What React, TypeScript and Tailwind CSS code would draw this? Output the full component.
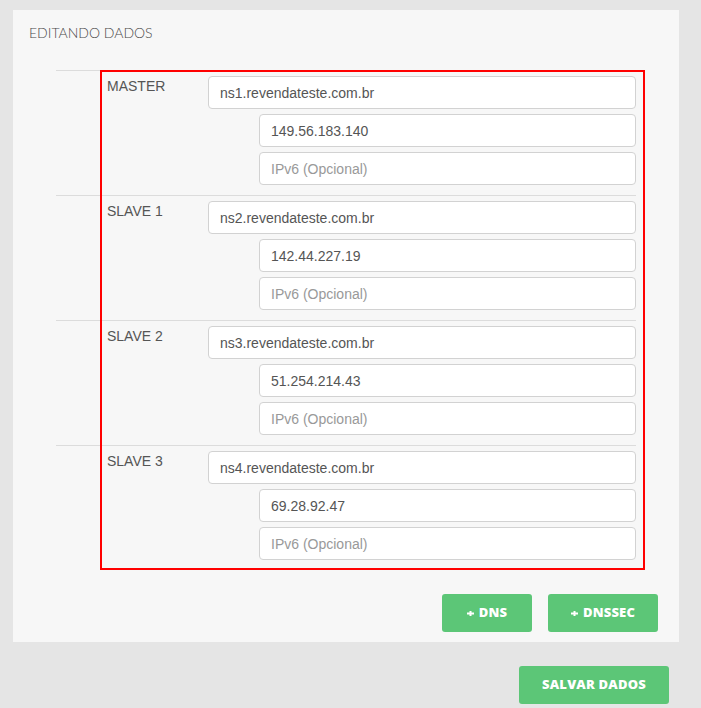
import React from 'react'

interface NsRecord {
  label: string
  host: string
  ipv4: string
}

const records: NsRecord[] = [
  { label: 'MASTER', host: 'ns1.revendateste.com.br', ipv4: '149.56.183.140' },
  { label: 'SLAVE 1', host: 'ns2.revendateste.com.br', ipv4: '142.44.227.19' },
  { label: 'SLAVE 2', host: 'ns3.revendateste.com.br', ipv4: '51.254.214.43' },
  { label: 'SLAVE 3', host: 'ns4.revendateste.com.br', ipv4: '69.28.92.47' },
]

const inputClass =
  'block h-[33px] w-full rounded-[4px] border border-[#d2d2d2] bg-white px-[11px] text-[14px] text-[#555] outline-none placeholder:text-[#999]'

const PlusIcon = () => (
  <svg width="7" height="7" viewBox="0 0 7 7" className="mr-[5px]">
    <path d="M0 3.5h7M3.5 1v5" stroke="white" strokeWidth="2" />
  </svg>
)

const GreenButton = ({ children, width }: { children: React.ReactNode; width: string }) => (
  <button
    className={`flex h-[38px] ${width} items-center justify-center rounded-[3px] bg-[#5cc677] text-[13px] font-extrabold tracking-[0.2px] text-white`}
    style={{ fontFamily: '"Open Sans", sans-serif' }}
  >
    {children}
  </button>
)

const NsGroup = ({ record }: { record: NsRecord }) => (
  <div className="border-t border-[#dcdcdc] pt-[5px] pb-[10px]">
    <div className="flex">
      <div className="w-[152px] shrink-0 pl-[51px] pt-[2px] text-[14px] leading-[16px] text-[#555]">
        {record.label}
      </div>
      <input className={inputClass} defaultValue={record.host} />
    </div>
    <div className="mt-[5px] flex flex-col gap-[5px] pl-[203px]">
      <input className={inputClass} defaultValue={record.ipv4} />
      <input className={inputClass} placeholder="IPv6 (Opcional)" />
    </div>
  </div>
)

export default function App() {
  return (
    <div
      className="min-h-screen w-full bg-[#e5e5e5] pt-[10px] pl-[13px]"
      style={{ fontFamily: '"Liberation Sans", Arial, sans-serif' }}
    >
      <div className="w-[666px] bg-[#f7f7f7] pb-[10px]">
        <h2
          className="px-[16px] pt-[14px] text-[14px] font-light leading-[18px] text-[#4a4a4a]"
          style={{ fontFamily: 'Lato, sans-serif' }}
        >
          EDITANDO DADOS
        </h2>

        {/* name server rows */}
        <div className="relative ml-[43px] mt-[28px] w-[580px]">
          {records.map((r) => (
            <NsGroup key={r.label} record={r} />
          ))}
          <div className="pointer-events-none absolute left-[44px] top-0 h-[500px] w-[545px] border-2 border-[#ff0000]" />
        </div>

        <div className="mt-[24px] flex justify-end gap-[16px] pr-[21px]">
          <GreenButton width="w-[90px]">
            <PlusIcon />
            DNS
          </GreenButton>
          <GreenButton width="w-[110px]">
            <PlusIcon />
            DNSSEC
          </GreenButton>
        </div>
      </div>

      <div className="flex w-[656px] justify-end pt-[24px]">
        <GreenButton width="w-[150px]">SALVAR DADOS</GreenButton>
      </div>
    </div>
  )
}
